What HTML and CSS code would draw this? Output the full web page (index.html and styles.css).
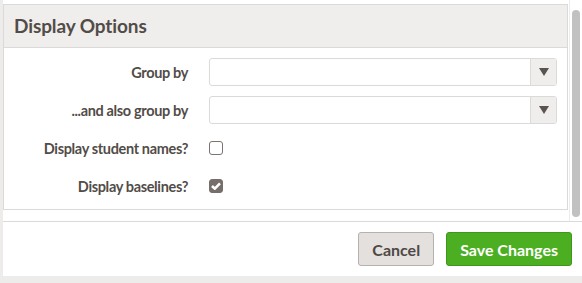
FILE: index.html
```html
<!DOCTYPE html>
<html>
<head>
<meta charset="utf-8">
<link rel="stylesheet" href="styles.css">
</head>
<body>
<div class="modal">
  <div class="modal-main">
    <div class="modal-body">
      <div class="panel">
        <div class="panel-heading">Display Options</div>
        <div class="panel-body">
          <div class="form-row">
            <label class="form-label">Group by</label>
            <div class="select">
              <span class="select-value"></span>
              <span class="select-arrow"><svg width="10" height="8" viewBox="0 0 10 8"><path d="M0 0H10L5 8Z" fill="#5a534f"/></svg></span>
            </div>
          </div>
          <div class="form-row">
            <label class="form-label">...and also group by</label>
            <div class="select">
              <span class="select-value"></span>
              <span class="select-arrow"><svg width="10" height="8" viewBox="0 0 10 8"><path d="M0 0H10L5 8Z" fill="#5a534f"/></svg></span>
            </div>
          </div>
          <div class="form-row">
            <label class="form-label">Display student names?</label>
            <span class="checkbox"></span>
          </div>
          <div class="form-row">
            <label class="form-label">Display baselines?</label>
            <span class="checkbox checked"><svg width="10" height="8" viewBox="0 0 10 8"><path d="M1 4L3.8 6.6L9 1.4" fill="none" stroke="#fff" stroke-width="2.6"/></svg></span>
          </div>
        </div>
      </div>
    </div>
    <div class="scrollbar"><div class="thumb"></div></div>
  </div>
  <div class="modal-footer">
    <button class="btn btn-default">Cancel</button>
    <button class="btn btn-primary">Save Changes</button>
  </div>
</div>
</body>
</html>
```

FILE: styles.css
```css
html, body {
  margin: 0;
  padding: 0;
}
body {
  background: #edecea;
  font-family: Lato, "Open Sans", sans-serif;
  color: #524c48;
  width: 582px;
  height: 283px;
  overflow: hidden;
}
.modal {
  margin-left: 3px;
  background: #fff;
  height: 276px;
  display: flex;
  flex-direction: column;
}
.modal-main {
  display: flex;
  height: 221px;
  border-bottom: 1px solid #dcdad8;
}
.modal-body {
  flex: 1;
  padding-top: 4px;
  padding-right: 1px;
}
.panel {
  border: 1px solid #dcdad8;
}
.panel-heading {
  background: #efeeec;
  border-bottom: 1px solid #dcdad8;
  height: 42px;
  line-height: 42px;
  padding-left: 10px;
  font-weight: 700;
  font-size: 19px;
  letter-spacing: -0.1px;
}
.panel-body {
  padding: 10px 10px 9px 0;
  display: flex;
  flex-direction: column;
  gap: 10px;
}
.form-row {
  display: grid;
  grid-template-columns: 184px 1fr;
  column-gap: 21px;
  align-items: center;
  height: 28px;
}
.form-label {
  text-align: right;
  font-weight: 700;
  font-size: 14.5px;
  letter-spacing: -0.35px;
}
.select {
  display: flex;
  height: 26px;
  border: 1px solid #dcdad8;
  border-radius: 3px;
  overflow: hidden;
}
.select-value {
  flex: 1;
}
.select-arrow {
  width: 25px;
  background: #efeeec;
  border-left: 1px solid #dcdad8;
  display: flex;
  align-items: center;
  justify-content: center;
}
.checkbox {
  width: 12px;
  height: 12px;
  border: 1.5px solid #7a736f;
  border-radius: 3px;
  display: flex;
  align-items: center;
  justify-content: center;
}
.checkbox.checked {
  background: #756e6a;
  border-color: #756e6a;
}
.scrollbar {
  width: 12px;
  border-left: 1px solid #eeeceb;
}
.thumb {
  margin: 10px 0 0 2px;
  width: 8px;
  height: 207px;
  border-radius: 4px;
  background: #c1c1c1;
}
.modal-footer {
  flex: 1;
  display: flex;
  justify-content: flex-end;
  align-items: center;
  gap: 12px;
  padding-right: 10px;
}
.btn {
  font-family: Lato, "Open Sans", sans-serif;
  font-weight: 700;
  font-size: 16px;
  height: 34px;
  border-radius: 3px;
  padding: 0 13px;
  cursor: pointer;
}
.btn-default {
  background: #e3e0de;
  border: 1px solid #b6b1ae;
  color: #4e4845;
}
.btn-primary {
  background: #4caf22;
  border: 1px solid #3f961a;
  color: #fff;
}
```
